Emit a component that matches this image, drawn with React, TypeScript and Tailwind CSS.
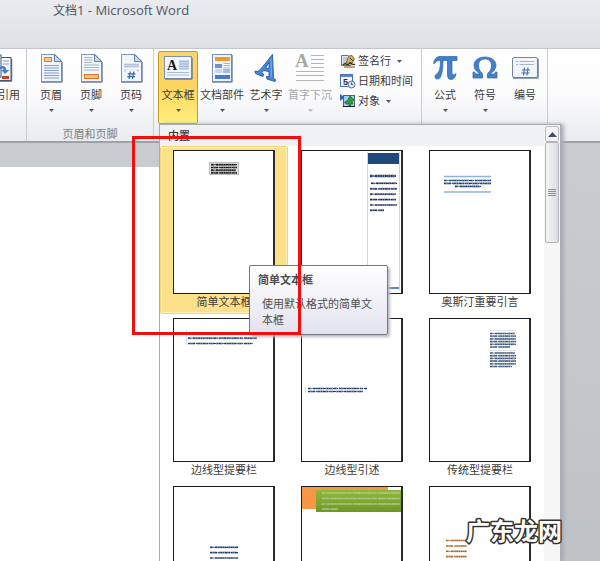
import type { ReactNode } from 'react'

const fontStack = "font-['Open_Sans','Noto_Sans_CJK_SC',sans-serif]"

type Row = [x: number, y: number, width: number]

// Unreadably small preview copy, one dashed stroke per line
function TinyText({ rows, color, height = 2 }: { rows: Row[]; color: string; height?: number }) {
  return (
    <g stroke={color} fill="none">
      {rows.map(([x, y, width], i) => (
        <g key={i}>
          <path
            d={`M${x} ${y}H${x + width}`}
            strokeWidth={height}
            strokeDasharray={i % 2 ? '7 1.5 12 1 5 1.5' : '3 2 11 1 8 1'}
            opacity={0.5}
          />
          <path d={`M${x} ${y}H${x + width}`} strokeWidth={height - 0.8} strokeDasharray="2 .7 1 .7 3 .8 1.5 .6" />
        </g>
      ))}
    </g>
  )
}

function PageFrame({ children }: { children: ReactNode }) {
  return (
    <svg viewBox="0 0 102 144" className="w-[102px] h-36 shrink-0 block" aria-hidden="true">
      <rect width="102" height="144" fill="#fff" />
      {children}
      <path d="M.5 0V144M0 .5H102M0 143.5H102" stroke="#1c1c1c" />
      <path d="M101 0V144" stroke="#2b2b2b" strokeWidth="2" />
    </svg>
  )
}

const navy = '#1f3f6e'

// hideCaption: the caption is covered by the tooltip or lies below the fold
const gallery: { name: string; hideCaption?: boolean; art: ReactNode }[] = [
  {
    name: '简单文本框',
    art: (
      <>
        <rect x="36.5" y="12.5" width="29" height="12" fill="#e4e4e4" stroke="#bdbdbd" />
        <TinyText color="#111" rows={[[38, 14.7, 26], [38, 17.5, 26], [38, 20.2, 25], [38, 22.8, 26]]} />
      </>
    ),
  },
  {
    name: '边线型提要栏',
    hideCaption: true,
    art: (
      <>
        <path d="M66.5 2V140M98.5 2V140" stroke="#d6d6c9" />
        <rect x="67" y="3" width="31" height="11" fill="#1f497d" />
        <TinyText color={navy} height={3} rows={[[69, 26, 26]]} />
        <TinyText
          color="#1d2f4f"
          rows={[[70, 33.3, 26], [69, 38.8, 27], [69, 44.2, 26], [69, 49.6, 26], [69, 55, 27], [69, 60.3, 14]]}
        />
        <path d="M67 138H98" stroke="#5c88c5" strokeWidth="2" />
      </>
    ),
  },
  {
    name: '奥斯汀重要引言',
    art: (
      <>
        <path d="M15 26.5H62M15 42H62" stroke="#8fb2dc" strokeWidth="1.5" />
        <TinyText color={navy} rows={[[15, 30.5, 47], [15, 33.4, 47], [26, 36.4, 26]]} />
      </>
    ),
  },
  {
    name: '边线型提要栏',
    art: (
      <>
        <path d="M13.5 12V27" stroke="#d5deea" />
        <TinyText color={navy} rows={[[15, 20.2, 69], [15, 25.5, 65]]} />
      </>
    ),
  },
  {
    name: '边线型引述',
    art: (
      <>
        <path d="M4.5 69V75" stroke="#cbd5e4" />
        <TinyText color={navy} rows={[[7, 70.5, 59], [7, 73.5, 55]]} />
      </>
    ),
  },
  {
    name: '传统型提要栏',
    art: (
      <>
        <path d="M61 12.5H87M61 32.5H87" stroke="#dbe3ee" />
        <TinyText
          color="#3c5578"
          rows={[[61, 15.5, 25], [61, 18.2, 26], [61, 20.9, 26], [61, 23.6, 26], [61, 26.3, 26], [61, 29, 20]]}
        />
        <TinyText
          color="#3c5578"
          rows={[[61, 35, 25], [61, 37.7, 26], [61, 40.4, 26], [61, 43.1, 26], [61, 45.8, 26], [61, 48.5, 22]]}
        />
      </>
    ),
  },
  {
    name: '堆积型引述',
    hideCaption: true,
    art: <TinyText color={navy} rows={[[37, 61.3, 28], [37, 66.6, 28], [37, 72, 28]]} />,
  },
  {
    name: '飞越型引述',
    hideCaption: true,
    art: (
      <>
        <defs>
          <linearGradient id="green" x1="0" y1="0" x2="0" y2="1">
            <stop offset="0" stopColor="#8dbb3c" />
            <stop offset="1" stopColor="#6f9628" />
          </linearGradient>
        </defs>
        <rect x="1" y="1" width="86" height="22" fill="#f79646" />
        <rect x="15" y="4" width="87" height="22" fill="url(#green)" />
        <TinyText color="#b4c98a" rows={[[21, 7, 78], [21, 12.5, 78], [21, 18, 78], [21, 23, 16]]} />
      </>
    ),
  },
  {
    name: '现代型引述',
    hideCaption: true,
    art: <TinyText color="#a9672c" rows={[[17, 54.5, 21], [17, 60, 21], [17, 65.3, 21], [17, 70.6, 21]]} />,
  },
]

function Caret({ muted = false }: { muted?: boolean }) {
  return (
    <svg viewBox="0 0 5 3" className="w-[5px] h-[3px] shrink-0" aria-hidden="true">
      <path d="M0 0H5L2.5 3Z" fill={muted ? '#b9bcc0' : '#55585d'} />
    </svg>
  )
}

function DocIcon({ children }: { children: ReactNode }) {
  return (
    <svg viewBox="0 0 30 30" className="size-[30px]" aria-hidden="true">
      <path d="M5.5 1.5H19L25.5 8V28.5H5.5Z" fill="#f1f6fc" stroke="#8195b3" />
      <path d="M5 29.2H26.2V9" fill="none" stroke="#62779a" />
      <path d="M18.5 1.5V8.5H25.5Z" fill="#c9dbf0" stroke="#6580a8" />
      {children}
    </svg>
  )
}

const HeaderIcon = () => (
  <DocIcon>
    <rect x="8.5" y="4.5" width="7" height="4" fill="#fbc98a" stroke="#d9802a" />
    <path d="M8 12.5H23M8 15H23M8 17.5H23M8 20H23M8 22.5H23M8 25H23" stroke="#7f9ccb" />
  </DocIcon>
)

const FooterIcon = () => (
  <DocIcon>
    <path d="M8 4.5H16M8 7H16M8 9.5H16M8 12H23M8 14.5H23M8 17H23" stroke="#a4b3cf" />
    <rect x="8.5" y="21.5" width="14" height="4" fill="#ffc078" stroke="#d9782b" />
  </DocIcon>
)

const PageNumberIcon = () => (
  <DocIcon>
    <path d="M8 11.5H23M8 13.5H23M8 17.5H23" stroke="#b4c0d8" strokeWidth="1.5" />
    <rect x="10" y="17" width="11" height="10" fill="#f1f6fc" />
    <path d="M14.3 18.5L13 26M17.8 18.5L16.500 26M11.800 20.800H19.500M11.300 23.700H19" stroke="#3d659f" strokeWidth="1.200" />
  </DocIcon>
)

const TextBoxIcon = () => (
  <svg viewBox="0 0 30 30" className="size-[30px]" aria-hidden="true">
    <rect x="1.5" y="3.500" width="27" height="22" fill="#f3f7fc" stroke="#7c91ad" />
    <path d="M2 26.200H29.200V5" fill="none" stroke="#63758f" />
    <rect x="16" y="7" width="10" height="9" fill="#c7d7ee" />
    <path d="M16 8.500H26M16 11H26M16 13.500H26M16 16H26M4 19.500H26M4 22H26" stroke="#a6b9d8" />
    <text x="4" y="17" fontSize="14" fontWeight="bold" fontFamily="Liberation Serif, serif" fill="#161616">A</text>
  </svg>
)

const QuickPartsIcon = () => (
  <svg viewBox="0 0 30 30" className="size-[30px]" aria-hidden="true">
    <rect x="5.500" y="1.500" width="19" height="27" fill="#f0f5fc" stroke="#778fb4" />
    <path d="M5 29.200H25.200V2" fill="none" stroke="#667da3" />
    <rect x="8" y="4" width="15" height="4" fill="#f4962c" />
    <rect x="8" y="11" width="7" height="4" fill="#6f93ce" />
    <path d="M16.500 10.500H23M16.500 12.500H23M8 17H15M8 19H15M16.500 15H23" stroke="#a5b7d5" />
    <rect x="16" y="16" width="7" height="4" fill="#a3bbe2" />
    <rect x="8" y="22" width="15" height="4" fill="#4a78c8" />
  </svg>
)

const WordArtIcon = () => (
  <svg viewBox="0 0 30 30" className="size-[30px]" aria-hidden="true">
    <path
      d="M21.500 1.500C16 8 11 15.500 7 18.500L4 18L4.500 20.500L12 23.500L12.500 21L10.500 20L12.500 17.500L18 18.500L18 24L15.500 23.500L16 26L24 28.500L24.500 26.500L22.500 25.500Z M14.500 15L18.200 9.500L18 15.500Z"
      fill="#4788d6"
      stroke="#2a5fae"
      strokeLinejoin="round"
      fillRule="evenodd"
    />
    <path d="M20 6L20.300 24" stroke="#7fb2ec" />
  </svg>
)

const DropCapIcon = () => (
  <svg viewBox="0 0 30 30" className="size-[30px]" aria-hidden="true">
    <text x="0" y="14" fontSize="19" fontWeight="bold" fontFamily="Liberation Serif, serif" fill="#a9a9a9">A</text>
    <path d="M16 2.500H29M16 6.500H29M16 10.500H29M16 14.500H29M1 18.500H29M1 22.500H29M1 27.500H29" stroke="#b5b5b5" />
  </svg>
)

const CrossRefIcon = () => (
  <svg viewBox="0 0 30 30" className="size-[30px]" aria-hidden="true">
    <rect x="16" y="4.500" width="12" height="23" fill="#f4f8fd" stroke="#41597f" />
    <path d="M16 28.200H28.700V6" fill="none" stroke="#41597f" />
    <rect x="2" y="2" width="16" height="22" fill="#f4f8fd" stroke="#41597f" />
    <path d="M20 8H26M20 11H26" stroke="#7d97c4" />
    <path d="M17 14C20 12 23 13.500 23.500 17H26.500L22 21L18 17H20.500C20 15.500 19 15 17 16.500Z" fill="#4b7fce" />
    <rect x="19" y="23" width="7" height="3" fill="#c9402a" />
  </svg>
)

const PiIcon = () => (
  <svg viewBox="0 0 30 30" className="size-[30px]" aria-hidden="true">
    <path
      d="M3.500 10.500C4.500 6 6.500 3.500 10 3.500H27V7.500H22V19.500C22 22 24 22.500 26 20.500C25.500 24.500 23.500 26.500 21 26.500C18 26.500 17.500 24 17.500 21V7.500H13C13 14 12.500 19.500 10.500 24C9.500 26.500 5 27 5 23.500C5 21.500 8.500 20.500 9.500 17C10.300 14 10.500 11 10.500 7.500C7.500 7.500 6 8 4.500 10.500Z"
      fill="#4380cb"
      stroke="#2b62ad"
      strokeWidth=".7"
    />
  </svg>
)

const OmegaIcon = () => (
  <svg viewBox="0 0 30 30" className="size-[30px]" aria-hidden="true">
    <path
      d="M3 19H4.500C5 20.500 5.500 21 7 21H10C6.500 18.500 4 16 4 12.500C4 7.500 8.500 4 15 4S26 7.500 26 12.500C26 16 23.500 18.500 20 21H23C24.500 21 25 20.500 25.500 19H27V25H17.500V20.500C20 18.500 21.500 16 21.500 12.500C21.500 8.500 19 6 15 6S8.500 8.500 8.500 12.500C8.500 16 10 18.500 12.500 20.500V25H3Z"
      fill="#4380cb"
      stroke="#2b62ad"
      strokeWidth=".7"
    />
  </svg>
)

const NumberIcon = () => (
  <svg viewBox="0 0 30 30" className="size-[30px]" aria-hidden="true">
    <rect x="2.500" y="4.500" width="25" height="20" rx="1.500" fill="#f1f5fa" stroke="#7388a4" />
    <path d="M3 25.200H28.200V6" fill="none" stroke="#5f7391" />
    <path d="M6 8.500H8M9.500 8.500H24M6 11.500H8M9.500 11.500H24" stroke="#a9b5c8" />
    <path d="M14.500 14.500L13.500 22.500M18 14.500L17 22.500M12 17H20M11.500 20H19.500" stroke="#4a74ac" strokeWidth="1.200" />
  </svg>
)

const SignatureIcon = () => (
  <svg viewBox="0 0 16 16" className="size-4 shrink-0" aria-hidden="true">
    <path d="M1.500 2.500H8L11 5V12.500H1.500Z" fill="#dfe8f4" stroke="#61758f" />
    <path d="M3 5H8M3 7H7M3 9H6" stroke="#9cadc4" />
    <path d="M6 10L9 3L12 2.500L14.500 6L12 10Z" fill="#e0b043" stroke="#6d5322" strokeWidth=".8" />
    <path d="M10 5L13 8" stroke="#3a3a3a" />
    <path d="M3 12C6 8 7 14 9 11S12 13 15 11" fill="none" stroke="#262626" strokeWidth="1.300" />
    <path d="M4 14H15" stroke="#b08a2c" strokeWidth="1.500" />
  </svg>
)

const DateIcon = () => (
  <svg viewBox="0 0 16 16" className="size-4 shrink-0" aria-hidden="true">
    <rect x=".500" y="1.500" width="12" height="12" fill="#f4f7fc" stroke="#4a6fae" />
    <rect x="1" y="2" width="11" height="2" fill="#5a86cc" />
    <text x="3" y="12" fontSize="9" fontWeight="bold" fontFamily="Liberation Sans, sans-serif" fill="#1f2c44">5</text>
    <circle cx="11.500" cy="11.500" r="3.500" fill="#d9e6f6" stroke="#57779f" />
    <path d="M11.500 9.500V11.500H13" fill="none" stroke="#34527c" />
  </svg>
)

const ObjectIcon = () => (
  <svg viewBox="0 0 16 16" className="size-4 shrink-0" aria-hidden="true">
    <rect x="3.500" y="2.500" width="11" height="11" fill="#9fd0ee" stroke="#4a627c" />
    <path d="M10 3L14 7L12 8.500L13 11H10.500V13H9V11H6L4.500 9L7 8Z" fill="#2e9a3e" stroke="#14521d" strokeWidth=".6" />
    <path d="M0 1L4.500 4.500L0 8Z" fill="#2d62c4" />
    <path d="M3 13.500H15" stroke="#16202c" />
  </svg>
)

type RibbonButtonProps = {
  icon: ReactNode
  label: string
  width: string
  caret?: boolean
  active?: boolean
  disabled?: boolean
}

function RibbonButton({ icon, label, width, caret = true, active = false, disabled = false }: RibbonButtonProps) {
  return (
    <button
      type="button"
      disabled={disabled}
      className={`${width} h-[73px] shrink-0 flex flex-col items-center pt-px rounded-xs border whitespace-nowrap ${
        active ? 'border-[#c29b29] bg-linear-to-b from-[#f8d46e] via-[#fdd560] to-[#fff07e]' : 'border-transparent'
      }`}
    >
      {icon}
      <span className={`mt-1 text-[11px] leading-4 ${disabled ? 'text-[#a3a6aa]' : 'text-[#3b3b3b]'}`}>{label}</span>
      {caret && (
        <span className="mt-1.5">
          <Caret muted={disabled} />
        </span>
      )}
    </button>
  )
}

function SmallButton({ icon, label, caret }: { icon: ReactNode; label: string; caret?: boolean }) {
  return (
    <button type="button" className="flex items-center h-5 gap-0.5 text-[11px] leading-4 text-[#3b3b3b] whitespace-nowrap">
      {icon}
      <span className="pr-1">{label}</span>
      {caret && <Caret />}
    </button>
  )
}

function Group({ width, label, children }: { width: string; label?: string; children: ReactNode }) {
  return (
    <div className={`${width} shrink-0 flex flex-col border-r border-[#c9ccd1] pt-0.5`}>
      <div className="flex">{children}</div>
      {label && <p className="text-center text-[11px] leading-4 mt-0.5 text-[#7b7f86]">{label}</p>}
    </div>
  )
}

function Ribbon() {
  return (
    <div className="flex h-[95px] shrink-0 overflow-hidden border-t border-[#c3c7cc] border-b-2 border-b-[#9da1a8] bg-linear-to-b from-white via-[#fbfbfc] to-[#e9ebef]">
      <div className="w-[27px] shrink-0 flex justify-end pr-1 pt-0.5 overflow-hidden border-r border-[#c9ccd1]">
        <RibbonButton icon={<CrossRefIcon />} label="交叉引用" width="w-12" caret={false} />
      </div>
      <Group width="w-[127px]" label="页眉和页脚">
        <span className="w-1" />
        <RibbonButton icon={<HeaderIcon />} label="页眉" width="w-10" />
        <RibbonButton icon={<FooterIcon />} label="页脚" width="w-10" />
        <RibbonButton icon={<PageNumberIcon />} label="页码" width="w-10" />
      </Group>
      <Group width="w-[268px]">
        <span className="w-1" />
        <RibbonButton icon={<TextBoxIcon />} label="文本框" width="w-10" active />
        <RibbonButton icon={<QuickPartsIcon />} label="文档部件" width="w-12" />
        <RibbonButton icon={<WordArtIcon />} label="艺术字" width="w-10" />
        <RibbonButton icon={<DropCapIcon />} label="首字下沉" width="w-12" disabled />
        <div className="flex flex-col pl-1.5">
          <SmallButton icon={<SignatureIcon />} label="签名行" caret />
          <SmallButton icon={<DateIcon />} label="日期和时间" />
          <SmallButton icon={<ObjectIcon />} label="对象" caret />
        </div>
      </Group>
      <Group width="w-[126px]">
        <span className="w-[3px]" />
        <RibbonButton icon={<PiIcon />} label="公式" width="w-10" />
        <RibbonButton icon={<OmegaIcon />} label="符号" width="w-10" />
        <RibbonButton icon={<NumberIcon />} label="编号" width="w-10" caret={false} />
      </Group>
    </div>
  )
}

function TextBoxMenu() {
  return (
    <div className="absolute left-[159px] top-[124px] bottom-0 w-[402px] flex overflow-hidden border-x border-t border-[#a9acb2] bg-white shadow-[3px_0_4px_#a9abb8]">
      <div className="flex-1 min-w-0">
        <h2 className="h-[21px] pl-2 pt-[3px] bg-[#eff1f5] text-[11px] leading-4 font-medium text-[#333]">内置</h2>
        <div className="grid grid-cols-3">
          {gallery.map((item, i) => (
            <button
              key={i}
              type="button"
              aria-label={item.name}
              className={`h-[168px] flex flex-col items-center pt-[3px] rounded-xs border ${
                i === 0 ? 'border-[#f3d478] bg-[#fde18a] ring-1 ring-inset ring-[#fff0b8]' : 'border-transparent'
              }`}
            >
              <PageFrame>{item.art}</PageFrame>
              {!item.hideCaption && <span className="text-[11px] leading-4 text-[#3b3b3b]">{item.name}</span>}
            </button>
          ))}
        </div>
      </div>
      <div className="w-4 shrink-0 bg-[#f7f7f8] px-px pt-px">
        <button
          type="button"
          aria-label="向上滚动"
          className="w-full h-4 flex items-center justify-center rounded-xs border border-[#b5b8bf] bg-[#f3f4f7]"
        >
          <svg viewBox="0 0 9 5" className="w-[9px] h-[5px]" aria-hidden="true">
            <path d="M0 5H9L4.500 0Z" fill="#424c6b" />
          </svg>
        </button>
        <div className="h-[101px] flex flex-col items-center justify-center gap-px rounded-xs border border-[#b0b3b9] bg-linear-to-r from-[#f6f6f7] to-[#dcdddf]">
          <span className="w-2 h-px bg-[#8b8e94]" />
          <span className="w-2 h-px bg-[#8b8e94]" />
          <span className="w-2 h-px bg-[#8b8e94]" />
          <span className="w-2 h-px bg-[#8b8e94]" />
        </div>
      </div>
    </div>
  )
}

function Tooltip() {
  return (
    <div
      role="tooltip"
      className="absolute left-[249px] top-[265px] w-[139px] h-[70px] pl-2 pt-1.5 rounded-xs border border-[#77797f] bg-linear-to-b from-white to-[#e2e3f0] text-[11px] leading-4 text-[#4c4c4c] shadow-[2px_2px_3px_#b9b9c6]"
    >
      <p className="font-bold">简单文本框</p>
      <p className="pl-1 pr-3 mt-2">使用默认格式的简单文本框</p>
    </div>
  )
}

export default function App() {
  return (
    <div className={`relative h-screen overflow-hidden flex flex-col bg-[#c6cacf] ${fontStack}`}>
      <header className="h-12 shrink-0 pl-[53px] pt-0.5 bg-linear-to-b from-[#e9ebee] to-[#dfe2e5]">
        <h1 className="text-[13px] leading-4 text-[#4d5564] whitespace-pre">
          <span className="text-[12px]">文档</span>1 - Microsoft Word
        </h1>
      </header>
      <Ribbon />
      <main className="flex-1 pt-6 bg-linear-to-b from-[#c9cdd2] to-[#bfc3c8]">
        <div className="w-1/2 h-full bg-white" />
      </main>
      <TextBoxMenu />
      <Tooltip />
      <div className="absolute left-[132px] top-[136px] w-[169px] h-[199px] border-3 border-[#f40d0d] pointer-events-none" />
      <svg viewBox="0 0 108 44" className="absolute left-[460px] top-[508px] w-[108px] h-11" role="img" aria-label="广东龙网">
        <text
          x="6"
          y="32"
          fontSize="24"
          fontWeight="bold"
          fontFamily="Noto Sans CJK SC, sans-serif"
          fill="#fff"
          stroke="#333"
          strokeWidth="3"
          strokeLinejoin="round"
          paintOrder="stroke"
        >
          广东龙网
        </text>
      </svg>
    </div>
  )
}
